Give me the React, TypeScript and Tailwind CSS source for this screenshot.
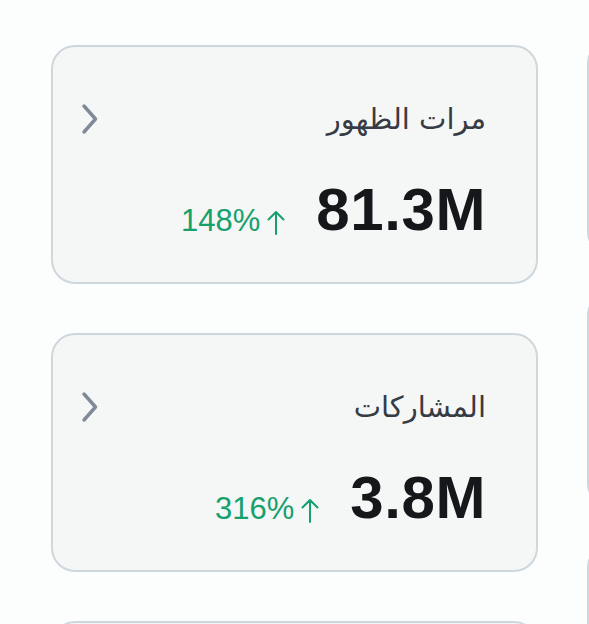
import type { JSX } from "react";

type Stat = {
  title: string;
  value: string;
  change: string;
};

const stats: Stat[] = [
  { title: "مرات الظهور", value: "81.3M", change: "148%" },
  { title: "المشاركات", value: "3.8M", change: "316%" },
];

function Chevron(): JSX.Element {
  return (
    <svg width="20" height="32" viewBox="0 0 20 32" fill="none" className="shrink-0">
      <path
        d="M4 3 L15.5 16 L4 29"
        stroke="#7f8a96"
        strokeWidth="3.4"
        strokeLinecap="round"
        strokeLinejoin="round"
      />
    </svg>
  );
}

function ArrowUp(): JSX.Element {
  return (
    <svg width="20" height="27" viewBox="0 0 20 27" fill="none" className="shrink-0">
      <path
        d="M10 25 V3 M2.5 10.5 L10 3 L17.5 10.5"
        stroke="#16a06c"
        strokeWidth="2"
        strokeLinecap="round"
        strokeLinejoin="round"
      />
    </svg>
  );
}

function StatCard({ stat }: { stat: Stat }): JSX.Element {
  return (
    <div className="flex h-[239px] w-[487px] shrink-0 flex-col rounded-[24px] border-2 border-[#cdd7dc] bg-[#f5f7f7] pl-[27px] pr-[50px] pt-[53px]">
      <div className="flex h-[38px] items-center justify-between">
        <Chevron />
        <span
          dir="rtl"
          className="text-[29px] leading-[38px] text-[#363b44]"
          style={{ fontFamily: '"DejaVu Sans", "Noto Sans", sans-serif' }}
        >
          {stat.title}
        </span>
      </div>
      <div className="mt-[42px] flex items-end justify-end gap-[30px]">
        <div className="mb-[4px] flex items-end gap-[6px]">
          <span
            className="text-[31px] leading-none text-[#16a06c]"
            style={{ fontFamily: '"Liberation Sans", Arial, sans-serif' }}
          >
            {stat.change}
          </span>
          <ArrowUp />
        </div>
        <span
          className="text-[60px] font-bold leading-none tracking-[0.6px] text-[#15171a]"
          style={{ fontFamily: '"Liberation Sans", Arial, sans-serif' }}
        >
          {stat.value}
        </span>
      </div>
    </div>
  );
}

function GhostCard({ className }: { className: string }): JSX.Element {
  return <div className={`shrink-0 border-2 border-[#cdd7dc] bg-[#f5f7f7] ${className}`} />;
}

export default function App(): JSX.Element {
  return (
    <div className="flex h-[624px] w-[589px] overflow-hidden bg-[#fcfdfd]">
      <div className="flex shrink-0 flex-col gap-[49px] pl-[51px] pt-[45px]">
        {stats.map((s) => (
          <StatCard key={s.title} stat={s} />
        ))}
        <GhostCard className="h-[239px] w-[487px] rounded-[24px]" />
      </div>
      <div className="ml-[49px] flex shrink-0 flex-col gap-[39px] pt-[41px]">
        <GhostCard className="h-[213px] w-[428px] rounded-[22px]" />
        <GhostCard className="h-[213px] w-[428px] rounded-[22px]" />
        <GhostCard className="h-[213px] w-[428px] rounded-[22px]" />
      </div>
    </div>
  );
}
